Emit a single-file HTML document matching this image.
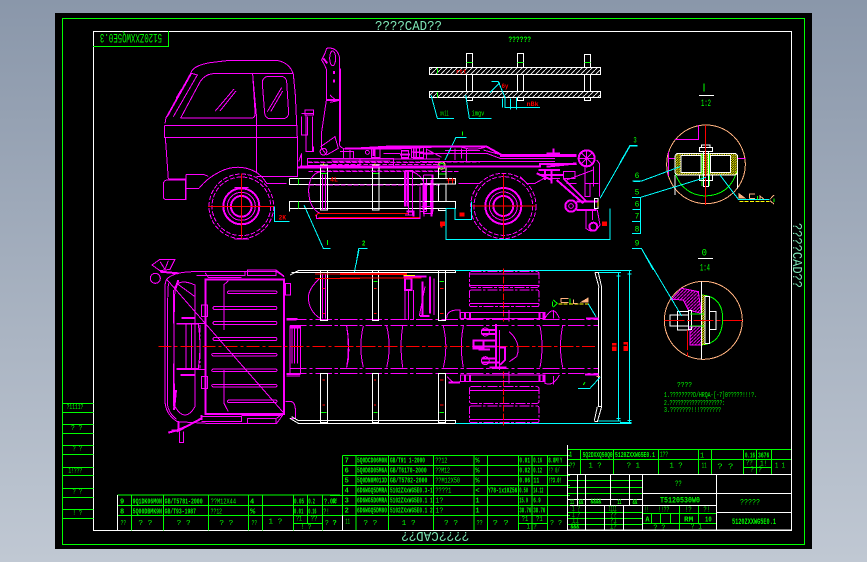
<!DOCTYPE html>
<html><head><meta charset="utf-8"><style>
html,body{margin:0;padding:0;width:867px;height:562px;overflow:hidden;background:linear-gradient(#8a97aa,#c0c8d3)}
#k{position:absolute;left:55px;top:13px;width:757px;height:536px;background:#000}
svg{position:absolute;left:0;top:0}
path,rect,circle,ellipse,line{fill:none}
.m{stroke:#f0f;stroke-width:3}.M{stroke:#f0f;stroke-width:6}
.w{stroke:#fff;stroke-width:3}.g{stroke:#0f0;stroke-width:3}.c{stroke:#0ff;stroke-width:3}
.r{stroke:#f00;stroke-width:3}.y{stroke:#ff0;stroke-width:3}.p{stroke:#ffb27f;stroke-width:3}
.d{stroke-dasharray:22 6 6 6}.e{stroke-dasharray:14 5}.f{stroke-dasharray:50 8 10 8}
text{font-family:"Liberation Mono",monospace;fill:#0f0;font-size:21px;font-weight:700}
.t{fill:#7fe8b8;font-size:14px;font-weight:400}
.n{font-weight:400}.rt{fill:#f00;font-size:20px}
.fr{fill:#f00;stroke:none}.fp{fill:#ffb27f;stroke:none}
.ftw{fill:url(#hw);stroke:#fff;stroke-width:3}
.fty{fill:url(#hy);stroke:#fff;stroke-width:3}
.ftm{fill:url(#hm);stroke:#f0f;stroke-width:3}
.bk{fill:#000}
</style></head><body><div id="k"></div>
<svg width="867" height="562" viewBox="0 0 867 562" xmlns="http://www.w3.org/2000/svg">
<defs>
<pattern id="hw" width="15" height="15" patternUnits="userSpaceOnUse"><path d="M0 15L15 0" stroke="#fff" stroke-width="2.6"/></pattern>
<pattern id="hy" width="7" height="7" patternUnits="userSpaceOnUse"><path d="M0 7L7 0" stroke="#ff0" stroke-width="3"/></pattern>
<pattern id="hm" width="10" height="10" patternUnits="userSpaceOnUse"><path d="M0 10L10 0" stroke="#f0f" stroke-width="3"/></pattern>
</defs>

<!-- frames -->
<rect x="62.5" y="18.5" width="742" height="526" stroke="#0f0" stroke-width="1"/>
<path d="M93.5 31.5H791.5V530.5H93.5Z" stroke="#fff" stroke-width="1"/>
<path d="M93 46.5H169M168.5 31V47" stroke="#0f0" stroke-width="1"/>
<text class="t" x="375" y="30" textLength="67" lengthAdjust="spacingAndGlyphs">????CAD??</text>
<text class="t" transform="translate(469 532) rotate(180)" textLength="68" lengthAdjust="spacingAndGlyphs" y="0">????CAD??</text>
<text class="t" transform="translate(793 223) rotate(90)" textLength="65" lengthAdjust="spacingAndGlyphs" y="0">????CAD??</text>
<text style="font-size:13px;font-weight:400" transform="translate(162 34) rotate(180)" y="0" textLength="62" lengthAdjust="spacingAndGlyphs">5120ZXXWQ5E0.3</text>

<!-- cab + front chassis, zoom coords -->
<g transform="translate(60 15) scale(.33333)" shape-rendering="crispEdges">
<path class="m" d="M315 325L318 308L392 175Q398 152 450 143L500 137H655Q690 145 700 178L706 240L713 390V485H590"/>
<path class="m" d="M313 331V367H713M313 331H713M316 367L325 492M578 178L590 310V472"/>
<path class="m" d="M362 309H578Q587 305 585 290L578 176M700 176H460Q430 178 415 210L362 309"/>
<path class="m" d="M625 184H665Q678 186 680 200L686 295Q684 310 670 311H630Q616 310 614 295L607 205Q607 186 625 184Z"/>
<path class="m" d="M466 288L522 222M480 288L528 228M622 290L665 218M632 290L668 228M322 305L395 175L412 180L340 305"/>
<path class="M" d="M350 250L365 225"/>
<path class="m" d="M417 520Q440 490 480 470Q520 450 560 460Q600 470 620 505H680M378 478H430L445 484M378 478V555M378 520H417"/>
<path class="m" d="M322 495H376V553H316Q310 552 310 545V505Q312 496 322 495Z"/><path class="M" d="M325 493H378"/>
<circle class="m e" cx="544" cy="574" r="97"/><circle class="m e" cx="544" cy="574" r="88"/>
<circle class="M" cx="544" cy="574" r="54"/><circle class="m" cx="544" cy="574" r="42"/><circle class="M" cx="544" cy="574" r="31"/>
<path class="m" d="M523 672H567M523 518H565"/>
<path class="r" d="M444 574H640M544 475V670"/>
<path class="c" d="M643 575V620H688M732 570L790 700H812M896 700L888 750M896 700H922"/>
<path class="w" d="M688 590V560H1140M688 580H1140M688 490V508H1140M688 490H1140"/>
<path class="g" d="M716 490V508M716 560V580M802 675V690"/>
<text class="rt" x="656" y="614" textLength="22" lengthAdjust="spacingAndGlyphs">2K</text>
<text class="rt" x="810" y="500" textLength="24" lengthAdjust="spacingAndGlyphs">4L</text>
<text x="906" y="692" textLength="10" lengthAdjust="spacingAndGlyphs">2</text>
<path class="m" d="M800 100Q830 95 838 125V390Q845 402 860 402M800 165V250L785 350V400L800 420M800 165Q795 150 785 135L795 115M800 100L795 115"/>
<ellipse class="m" cx="818" cy="130" rx="9" ry="22"/><path class="M" d="M790 130L802 145M800 255H838M840 160V380"/>
<path class="m" d="M810 240L830 258L810 262M820 170h4v6h-4zM820 195h4v6h-4z"/>
<path class="m" d="M725 295H762M735 285H760V300H735ZM725 305V360H742V305M738 300V410H760V395M758 305V410"/>
<path class="m" d="M782 395L825 365L835 400L800 420M790 400a10 10 0 1 0 1 0M716 440L725 415V455"/>
<path class="M" d="M860 400H900L1000 394H1140"/>
<path class="m" d="M742 430H900V452H742ZM815 432H1140M815 438H990M850 400V430M870 405V430M920 402H960M945 400V430M1025 408H1045V430H1025ZM1060 395H1090V430H1060ZM1070 395V430M1060 412H1090"/>
<path class="m e" d="M745 442H1140M815 448H1140" stroke-width="4"/>
<circle class="m" cx="922" cy="412" r="6"/>
<path class="M" d="M713 458H1140"/>
<path class="m e" d="M780 468H1140M748 510H1140"/>
<path class="w" d="M781 450H803V585H781ZM937 450H957V585H937Z"/>
<path class="m" d="M787 478V585M797 478V585M780 470Q745 480 746 530Q748 580 780 595M1035 466H1058V600H1035M1045 466V600M1058 470Q1082 480 1090 500M1090 480V595H1118V480H1090M1100 490V590"/>
<path class="M" d="M1118 478V590"/>
<path class="y" d="M783 453H799M939 453H955"/><path class="y" d="M791 446V458M945 446V458" />
<path class="g" d="M783 475H801M939 475H955"/>
<path class="r" d="M765 603L775 595H1045M775 607H1080" stroke-width="4"/>
<path class="m" d="M770 600V610H1080V590H1100"/>
<path class="M" d="M1040 590H1060V605"/>
</g>

<!-- deck density -->
<g transform="translate(300 120) scale(.33333)" shape-rendering="crispEdges">
<path class="M" d="M135 85H300L400 80H540M0 140H480"/>
<path class="m" d="M22 115H280V138H22ZM120 95H160V115M215 85H240V112H215ZM305 92H325V112H305ZM335 80H370V112H335ZM345 80V112M358 80V112M335 96H370M250 100H300M380 88L425 112M435 92H540M500 85V125"/>
<path class="m e" d="M22 126H540M25 155H480"/>
<path class="M" d="M220 88V108M300 104H330M370 100H400M315 152V260M322 152V260M375 190V270M395 180V290"/>
<path class="m" d="M365 190H392V260H365"/>
</g>

<!-- top view cab -->
<g transform="translate(60 250) scale(.33333)" shape-rendering="crispEdges">
<path class="m" d="M320 88Q340 66 400 65H650L672 80M672 490L650 520H440L352 515Q315 492 315 450V110Q315 98 320 88Z"/>
<path class="m" d="M326 100Q322 110 322 300V460Q325 490 350 508M340 120V220M340 340V470"/>
<path class="M" d="M436 85V495M433 88H675M433 492H675M672 85V495"/>
<path class="m" d="M505 92L492 104V240M492 360V460L505 485"/>
<path class="m" d="M506 123H648Q654 127 648 131H506Q498 127 506 123Z"/>
<path class="m" d="M462 170H648Q654 174 648 178H462Q454 174 462 170Z"/>
<path class="m" d="M462 215H648Q654 219 648 223H462Q454 219 462 215Z"/>
<path class="m" d="M462 263H648Q654 267 648 271H462Q454 267 462 263Z"/>
<path class="m" d="M460 310H648Q654 314 648 318H460Q450 314 460 310Z"/>
<path class="m" d="M460 357H648Q654 361 648 365H460Q450 361 460 357Z"/>
<path class="m" d="M460 403H648Q654 407 648 411H460Q450 407 460 403Z"/>
<path class="m" d="M506 450H648Q654 454 648 458H506Q498 454 506 450Z"/>
<path class="m" d="M345 110Q360 85 405 105V470Q375 520 345 470Q338 300 345 110Z"/>
<path class="m" d="M350 100L405 140M350 220H433M350 358H433M350 222H378V355H350M378 222H415Q425 290 415 355H378M395 222V355"/>
<path class="M" d="M345 120L355 90M348 420L342 480M365 204H405M362 375H405"/>
<path class="m d" d="M420 225V355"/>
<path class="m" d="M276 45L300 28H345L330 58L300 62ZM300 35L315 58M325 32L315 58"/>
<ellipse class="m" cx="286" cy="85" rx="15" ry="15"/><path class="M" d="M300 65L355 70"/>
<path class="m" d="M325 548L355 538L420 510M358 545V578H370V545M335 540H365"/><path class="M" d="M325 548L355 540M355 515V540M425 505L350 545"/>
<path class="m" d="M410 65H555V76H410M562 60H648V76H562ZM648 60L672 78M562 506H648V520H562ZM425 500H545V515H425M648 506L670 490M435 68L445 82H545M425 165H442V200H425ZM425 380H442V415H425ZM676 100H692V135H676ZM676 455H695Q708 460 706 490V505H690"/>
<path class="M" d="M545 495H665M425 495V510"/>
<path class="m" d="M690 228H722V370H690ZM696 235V340M704 235V340M712 235V340M680 205H712M680 378H720"/>
<path class="M" d="M680 208H710M680 372H722M692 232H720"/>
<path class="m f" d="M690 208H900M690 226H900M690 355H900M690 371H900"/>
<path class="m" d="M860 228Q868 270 866 325L860 352M780 85Q745 115 745 145Q748 185 780 205"/>
<path class="r" stroke-dasharray="40 8 10 8" d="M295 289H900"/>
<path class="w" d="M690 75L715 62H900M695 68L715 68H900M690 505L715 520H900M695 500L715 512H900"/>
<path class="w" d="M781 62V212H803V62M781 370H803V518H781Z"/>
<path class="m" d="M787 70V205M797 70V205"/>
<path class="r" d="M765 72H900M765 85H900"/>
<path class="c" d="M882 70L897 0"/>
<path class="r" d="M788 115h7M788 190h7M788 390h7M788 465h7" stroke-width="6"/>
<path class="g" d="M783 487H800"/>
</g>

<!-- top view chassis -->
<g transform="translate(340 250) scale(.33333)" shape-rendering="crispEdges">
<path class="m f" d="M0 208H775M0 226H775M0 355H775M0 371H775"/>
<path class="m" d="M20 228Q30 290 20 352M70 228Q55 290 70 352M140 228Q155 290 140 352M188 228Q178 290 188 352M310 228Q325 290 310 352M370 228Q358 290 370 352M600 228Q612 290 600 352M668 228Q655 290 668 352M508 245Q545 280 530 320L508 335"/>
<path class="r" stroke-dasharray="40 8 10 8" d="M0 289H765"/>
<path class="w" d="M0 62H347V68H0M0 512H347V520H0"/>
<path class="w" d="M97 62V212H116V62M295 62V212H317V62M97 370H116V518H97ZM295 370H317V518H295Z"/>
<path class="c" d="M347 62H875M347 520H875M836 68V512M868 62V520M775 68H843M775 513H843M830 78H842M862 72H874M830 505H842M862 512H874"/>
<g stroke-dasharray="30 5 8 5"><rect class="m" x="388" y="65" width="209" height="47" rx="6"/><rect class="m" x="388" y="120" width="209" height="50" rx="6"/><rect class="m" x="388" y="410" width="209" height="50" rx="6"/><rect class="m" x="388" y="468" width="209" height="50" rx="6"/></g>
<path class="m" d="M388 72H597M388 106H597M388 160H597M388 422H597M388 508H597"/>
<path class="r" stroke-dasharray="20 5" d="M490 55V215M490 365V527"/>
<path class="m" d="M362 187H615V205H362ZM362 375H615V395H362ZM320 205Q320 178 360 180V205M615 205Q640 160 658 205M322 380Q340 405 360 395M615 380V400Q640 410 658 375M640 180V205M640 378V403M507 180V215M507 365V400M478 240V360"/>
<path class="M" d="M375 186V205M390 186V205M598 186V205M610 186V205M375 375V395M390 375V395M598 375V395M610 375V395M325 397H360"/>
<path class="M" d="M468 222V352M425 240H470M425 252H465M402 272H470M402 290H470M415 298H450M425 325H470M425 338H480M448 352H500M480 292H495V330L480 345"/>
<circle class="m" cx="436" cy="246" r="12"/><circle class="m" cx="436" cy="332" r="12"/><rect class="M" x="400" y="272" width="30" height="24"/>
<path class="M" d="M195 85H215V120H195ZM270 80V190M248 95V195"/>
<path class="m" d="M195 120V210M205 120V210M220 120V210M238 198L255 110M282 85V195"/>
<path class="M" d="M190 80H260M240 198H268"/>
<path class="r" d="M0 70H200V73H0M0 84H245" stroke-width="4"/><path class="y" d="M190 76H225"/>
<path class="r" d="M102 115h8M102 190h8M300 115h10M300 190h10M102 390h6M102 465h6M300 390h10M300 465h10" stroke-width="5"/>
<path class="g" d="M298 95H312M100 95H112M298 487H312M100 487H112"/>
<path class="w" d="M775 112V470H785V112M765 68L777 112M775 68L785 112M763 512L772 470M772 515L785 470M765 68H775M763 514H772"/>
<path class="y" stroke-dasharray="12 4" d="M655 162H745"/>
<path class="g" d="M640 150L652 160L640 172M690 145V160M638 155V170"/>
<path class="c" d="M745 162L768 200"/>
<path class="p" d="M663 158V145H685M685 158H663M700 148V160L712 160"/>
<path class="fp" d="M720 157L745 142V157Z"/>
<path class="M" d="M738 206H775M735 374H775"/>
<path class="c" d="M714 415H750L780 382"/><path class="g" d="M730 405L735 396"/>
<path class="p" d="M770 380h10"/>
<path class="fr" d="M816 279h14v7h-14zM816 290h14v13h-14zM850 276h14v8h-14zM850 288h14v15h-14z"/>
</g>

<!-- plan rails + right side elevation -->
<g transform="translate(420 20) scale(.33333)" shape-rendering="crispEdges">
<text x="265" y="66" textLength="68" lengthAdjust="spacingAndGlyphs" style="font-size:24px">??????</text>
<rect class="ftw" x="28" y="142" width="514" height="21"/><rect class="ftw" x="28" y="214" width="514" height="19"/>
<path class="w" d="M140 142V100H157V142M140 163V214M157 163V214M140 233V242H157V233M293 142V100H310V142M293 163V214M310 163V214M293 233V242H310V233M494 142V103H512V142M494 163V214M512 163V214M494 233V242H512V233"/>
<path class="g" d="M140 127H157M293 127H310M494 127H512M52 144V160M52 216V232"/>
<path class="c" d="M33 225L52 295H102M137 225L148 295H215M215 185H235L255 232V262H360M248 262V235M272 235V268M290 232V268M210 218L240 188"/>
<text class="n" x="60" y="286" textLength="26" lengthAdjust="spacingAndGlyphs">xvii</text><text class="n" x="155" y="286" textLength="38" lengthAdjust="spacingAndGlyphs">imgv</text>
<text class="rt" x="108" y="160" textLength="32" lengthAdjust="spacingAndGlyphs">rtt</text><text class="rt" x="245" y="204" textLength="20" lengthAdjust="spacingAndGlyphs">6y</text><text class="rt" x="320" y="258" textLength="36" lengthAdjust="spacingAndGlyphs">nBk</text>
<!-- rear axle -->
<circle class="m e" cx="250" cy="558" r="98"/><circle class="m e" cx="250" cy="558" r="88"/>
<circle class="M" cx="250" cy="558" r="54"/><circle class="m" cx="250" cy="558" r="42"/><circle class="M" cx="250" cy="558" r="30"/>
<path class="r" d="M152 558H348M250 462V655"/>
<path class="w" d="M0 475H107V492H0M0 545H107V566H0M55 440V475M78 440V475M55 492V545M78 492V545M55 566V572H78V566"/>
<path class="m" d="M0 500V590M36 490V590M12 490V590M115 490H180M318 490H345L372 475H420M440 490H470"/>
<path class="M" d="M10 490V570"/>
<circle class="g" cx="65" cy="437" r="7"/><circle class="p" cx="65" cy="437" r="11"/>
<path class="g" d="M57 462H76M128 335V346"/>
<path class="c" d="M75 420L108 352H140M78 565V658H570V565M78 565H105V598H155V545M540 535L630 378H652M640 484H660M636 532H660M640 568H660M636 604H660M636 640H660M636 685H660"/>
<text x="640" y="368" textLength="10" lengthAdjust="spacingAndGlyphs" style="font-size:24px" class="n">3</text>
<text class="n" style="font-size:24px" x="644" y="474">6</text><text class="n" style="font-size:24px" x="644" y="524">5</text><text class="n" style="font-size:24px" x="644" y="560">6</text><text class="n" style="font-size:24px" x="644" y="596">7</text><text class="n" style="font-size:24px" x="644" y="634">8</text><text class="n" style="font-size:24px" x="644" y="676">9</text>
<path class="M" d="M0 380H200L245 405H470M0 440H360V432H470M380 440L470 430"/>
<path class="m" d="M0 400H200L240 415H405M0 425H405M20 385V415M105 385V420M125 385V415M190 390L245 405M120 380Q160 395 200 380"/>
<path class="M" d="M240 408H470M400 385V410M380 400H420"/>
<circle class="M" cx="500" cy="415" r="24"/><path class="m" d="M500 388V442M473 415H527M482 397L518 433M518 397L482 433"/>
<path class="m" d="M530 420L538 430V530M495 440V530H510V490M495 490H535M520 440V500M430 455H465V475H430Z"/>
<path class="M" d="M355 450H420M360 465H430M350 460L395 480M395 450V490M375 450V480M410 480L490 550M430 475L500 545"/>
<path class="m" d="M440 480L520 450M300 470L320 490"/>
<circle class="M" cx="453" cy="558" r="17"/><circle class="m" cx="453" cy="558" r="7"/>
<path class="M" d="M470 545H535M470 570H530"/>
<path class="m" d="M498 570V625Q520 645 540 615L532 570M518 570V600"/><circle class="M" cx="520" cy="620" r="12"/>
<path class="w" d="M523 535H534V566H523Z"/><path class="y" d="M534 545V560"/>
<rect class="fr" x="60" y="604" width="15" height="14"/><rect class="fr" x="62" y="618" width="6" height="5"/>
<rect class="fr" x="546" y="604" width="15" height="14"/><rect class="fr" x="118" y="578" width="16" height="12"/>
<path class="r" d="M80 480H106M85 474V490M97 474V490" stroke-width="4"/>
</g>

<!-- detail I -->
<g transform="translate(620 70) scale(.33333)" shape-rendering="crispEdges">
<circle class="p" cx="258" cy="283" r="118"/>
<path class="g" d="M252 40V64"/><path class="w" d="M237 76H282M234 565H279"/>
<text class="n" x="243" y="108" style="font-size:30px" textLength="30" lengthAdjust="spacingAndGlyphs">1:2</text>
<path class="m" d="M236 165V208H165M352 265H376M145 245V318M145 265H165"/>
<path class="g" d="M165 310Q190 375 256 378Q330 375 350 305"/>
<rect class="fty" x="165" y="250" width="188" height="65" rx="10"/>
<rect class="w bk" style="fill:#000" x="183" y="256" width="60" height="52"/><rect class="w" style="fill:#000" x="272" y="256" width="60" height="52"/>
<path class="g" d="M246 250V348M268 250V348"/><path class="w" d="M250 245V350H266V245"/>
<path class="w" d="M238 232H278V245H238ZM245 225H270V232H245ZM238 315H278V332H238Z"/>
<path class="w" d="M165 315V375M352 310V355"/>
<path class="r" d="M256 165V405"/>
<path class="c" d="M38 333H65L180 290M38 382H62L258 322M62 382V490H38M38 418H62M38 454H62M36 535H64L100 600M0 278L30 226H52M300 315L355 388H448"/>
<path class="y" stroke-dasharray="12 4" d="M358 394H448"/>
<path class="p" d="M450 388L462 375M450 392L462 402M388 385V372H405M388 385H405M420 388V378L432 388"/>
<path class="fp" d="M355 368L378 385H355Z"/><path class="g" d="M462 385V396M412 378V388"/>
</g>

<!-- detail II -->
<g transform="translate(620 240) scale(.33333)" shape-rendering="crispEdges">
<circle class="p" cx="250" cy="241" r="117"/>
<text x="245" y="46" class="n" style="font-size:30px" textLength="16" lengthAdjust="spacingAndGlyphs">0</text>
<text x="240" y="92" class="n" style="font-size:30px" textLength="30" lengthAdjust="spacingAndGlyphs">1:4</text>
<path class="ftm" d="M155 178L185 145L235 155L244 220L205 210L190 180Z"/><path class="ftm" d="M210 260H244V315H210Z"/>
<path class="g" d="M245 165Q310 170 308 241Q305 310 245 315"/>
<rect style="fill:url(#hy)" x="246" y="165" width="11" height="150"/>
<path class="w" d="M244 125V358M150 225H205V258H150ZM172 215H205V270H172ZM205 212H215V268H205ZM255 170H268V310H255ZM268 215H288V268H268Z"/>
<path class="g" d="M210 222H252M210 258H252"/>
<path class="r" stroke-dasharray="60 8 12 8" d="M133 241H368M202 270V350"/>
<path class="c" d="M36 25H64L185 228M0 92H35M28 92V548M0 548H35"/>
<path class="r" d="M10 310H22V332H10" stroke-width="4"/>
</g>
<text x="677" y="387" style="font-size:7px" textLength="15" lengthAdjust="spacingAndGlyphs" class="n">????</text>
<text x="664" y="397" style="font-size:7px" textLength="93" lengthAdjust="spacingAndGlyphs" class="n">1.????????D/HRQA-[-7]0?????!!!?.</text>
<text x="664" y="405" style="font-size:7px" textLength="61" lengthAdjust="spacingAndGlyphs" class="n">2.???????????????????:</text>
<text x="664" y="412" style="font-size:7px" textLength="57" lengthAdjust="spacingAndGlyphs" class="n">3.???????!!!???????</text>

<!-- title block right -->
<g transform="translate(560 440) scale(.33333)" shape-rendering="crispEdges">
<path class="g" d="M22 28H695M22 58H695M22 28V103M62 28V103M160 28V103M295 28V103M415 28V103M455 28V103M550 28V103M590 28V103M634 28V103M550 82H634M22 122H248M22 142H248M22 160H248M22 217H248M22 235H248M22 253H248M248 220H470M248 250H470M358 196V270M274 220V250M302 220V250M331 220V250M415 196V250"/>
<path class="w" d="M22 103H695M695 0V270H22V103M52 103V196M76 103V196M152 103V196M209 103V196M248 103V270M470 103V270M22 178H248M22 196H470M248 160H695M470 217H695M76 196V270M133 196V270M190 196V270"/>
<path class="g" d="M0 46H22M0 76H22M0 106H22M0 136H22M0 166H22M0 196H22M0 226H22"/>
<text x="28" y="50" textLength="8" lengthAdjust="spacingAndGlyphs">1</text>
<text x="68" y="51" textLength="90" lengthAdjust="spacingAndGlyphs">5Q2DXXQ50Q0</text>
<text x="165" y="51" textLength="120" lengthAdjust="spacingAndGlyphs">5120ZXXWG5E0.1</text>
<text class="n" x="300" y="50" textLength="24" lengthAdjust="spacingAndGlyphs">1??</text>
<text class="n" x="420" y="52">1</text>
<text x="555" y="52" textLength="30" lengthAdjust="spacingAndGlyphs">0.16</text><text x="594" y="52" textLength="34" lengthAdjust="spacingAndGlyphs">3676</text>
<text class="n" x="28" y="82" textLength="18" lengthAdjust="spacingAndGlyphs">??</text>
<text class="n" x="85" y="83" textLength="40" lengthAdjust="spacingAndGlyphs">1  ?</text>
<text class="n" x="200" y="83" textLength="40" lengthAdjust="spacingAndGlyphs">?  1</text>
<text class="n" x="328" y="83" textLength="40" lengthAdjust="spacingAndGlyphs">1  ?</text>
<text class="n" x="425" y="83" textLength="15" lengthAdjust="spacingAndGlyphs">11</text>
<text class="n" x="472" y="85" textLength="48" lengthAdjust="spacingAndGlyphs">?  ?</text>
<text class="n" x="558" y="74" textLength="20" lengthAdjust="spacingAndGlyphs">??</text><text class="n" x="600" y="76" textLength="22" lengthAdjust="spacingAndGlyphs">1!</text>
<text class="n" x="570" y="95" textLength="36" lengthAdjust="spacingAndGlyphs">? ?</text>
<text class="n" x="645" y="83" textLength="30" lengthAdjust="spacingAndGlyphs">1 1</text>
<text x="345" y="138" textLength="20" lengthAdjust="spacingAndGlyphs" class="n" style="font-size:24px">??</text>
<text x="300" y="188" textLength="120" lengthAdjust="spacingAndGlyphs" style="font-size:26px">T5120530W0</text>
<text x="540" y="194" textLength="60" lengthAdjust="spacingAndGlyphs" style="font-size:26px" class="n">?????</text>
<text x="516" y="252" textLength="132" lengthAdjust="spacingAndGlyphs" style="font-size:24px">5120ZXXWG5E0.1</text>
<text x="30" y="192" textLength="12" lengthAdjust="spacingAndGlyphs">11</text><text x="56" y="192" textLength="14" lengthAdjust="spacingAndGlyphs">&amp;&amp;</text><text x="92" y="190" textLength="32" lengthAdjust="spacingAndGlyphs">&amp;&amp;&amp;&amp;</text><text x="172" y="192" textLength="12" lengthAdjust="spacingAndGlyphs">11</text><text x="218" y="192" textLength="14" lengthAdjust="spacingAndGlyphs">&amp;&amp;</text>
<text class="n" x="36" y="212" textLength="24" lengthAdjust="spacingAndGlyphs">1 ?</text><text class="n" x="36" y="230" textLength="24" lengthAdjust="spacingAndGlyphs">1 ?</text><text class="n" x="36" y="248" textLength="20" lengthAdjust="spacingAndGlyphs">11</text><text x="32" y="266" textLength="26" lengthAdjust="spacingAndGlyphs">&amp;&amp;&amp;</text>
<text class="n" x="146" y="212" textLength="24" lengthAdjust="spacingAndGlyphs">1111</text><text class="n" x="150" y="230" textLength="20" lengthAdjust="spacingAndGlyphs">??</text><text class="n" x="150" y="248" textLength="20" lengthAdjust="spacingAndGlyphs">?1</text><text class="n" x="150" y="266" textLength="20" lengthAdjust="spacingAndGlyphs">1?</text>
<text class="n" x="252" y="214" textLength="14" lengthAdjust="spacingAndGlyphs">!!</text><text class="n" x="294" y="214" textLength="34" lengthAdjust="spacingAndGlyphs">!!??</text><text class="n" x="375" y="214" textLength="20" lengthAdjust="spacingAndGlyphs">!?</text><text class="n" x="430" y="214" textLength="20" lengthAdjust="spacingAndGlyphs">?!</text>
<text x="256" y="245">A</text><text x="372" y="244" textLength="28" lengthAdjust="spacingAndGlyphs">RM</text><text x="435" y="244" textLength="20" lengthAdjust="spacingAndGlyphs">10</text>
<text class="n" x="280" y="268" textLength="36" lengthAdjust="spacingAndGlyphs">? ?</text><text class="n" x="392" y="265" textLength="34" lengthAdjust="spacingAndGlyphs">? 1</text>
</g>

<!-- parts table upper -->
<g transform="translate(330 445) scale(.33333)" shape-rendering="crispEdges">
<path class="g" d="M38 31H720M38 62H720M38 92H720M38 122H720M0 152H720M0 182H720M0 212H720M38 31V212M78 31V256M175 31V256M310 31V256M432 31V256M472 31V256M565 31V256M606 31V256M652 31V256M565 235H652"/>
<path class="w" d="M38 212V256M0 256H720M712 0V256"/>
<text x="44" y="53">7</text><text x="44" y="83">6</text><text x="44" y="113">5</text><text x="44" y="143">4</text><text x="44" y="173">3</text><text x="44" y="203">2</text>
<text x="81" y="53" textLength="90" lengthAdjust="spacingAndGlyphs">5Q0DCD06M0N</text><text x="81" y="83" textLength="90" lengthAdjust="spacingAndGlyphs">5Q0D8D05M6A</text><text x="81" y="113" textLength="90" lengthAdjust="spacingAndGlyphs">5Q0DN8M013D</text><text x="81" y="143" textLength="90" lengthAdjust="spacingAndGlyphs">6D6WGQ5DMRA</text><text x="81" y="173" textLength="90" lengthAdjust="spacingAndGlyphs">6D6WG5D0MRA</text><text x="81" y="203" textLength="90" lengthAdjust="spacingAndGlyphs">6D6WGQ5DM80</text>
<text x="180" y="53" textLength="105" lengthAdjust="spacingAndGlyphs">GB/T91 1-2000</text><text x="180" y="83" textLength="110" lengthAdjust="spacingAndGlyphs">GB/T6170-2000</text><text x="180" y="113" textLength="112" lengthAdjust="spacingAndGlyphs">GB/T5782-2000</text><text x="180" y="143" textLength="128" lengthAdjust="spacingAndGlyphs">5102ZXxWG5E0.3-1</text><text x="180" y="173" textLength="128" lengthAdjust="spacingAndGlyphs">5102ZXxWG5E0.1 1</text><text x="180" y="203" textLength="128" lengthAdjust="spacingAndGlyphs">5102ZXxWG5E0.1 2</text>
<text class="n" x="316" y="53" textLength="36" lengthAdjust="spacingAndGlyphs">??12</text><text class="n" x="316" y="83" textLength="44" lengthAdjust="spacingAndGlyphs">??M12</text><text class="n" x="316" y="113" textLength="74" lengthAdjust="spacingAndGlyphs">??M12X50</text><text class="n" x="316" y="143" textLength="48" lengthAdjust="spacingAndGlyphs">????1</text><text class="n" x="316" y="173" textLength="24" lengthAdjust="spacingAndGlyphs">1?</text><text class="n" x="316" y="203" textLength="24" lengthAdjust="spacingAndGlyphs">1?</text>
<text x="436" y="53">%</text><text x="436" y="83">%</text><text x="436" y="113">%</text><text x="436" y="143">&lt;</text><text x="436" y="173">1</text><text x="436" y="203">1</text>
<text x="474" y="143" textLength="88" lengthAdjust="spacingAndGlyphs">Y78-1x10Z56</text>
<text x="568" y="53" textLength="32" lengthAdjust="spacingAndGlyphs">0.01</text><text x="568" y="83" textLength="32" lengthAdjust="spacingAndGlyphs">0.02</text><text x="568" y="113" textLength="32" lengthAdjust="spacingAndGlyphs">0.06</text><text x="568" y="143" textLength="26" lengthAdjust="spacingAndGlyphs">0.50</text><text x="568" y="173" textLength="26" lengthAdjust="spacingAndGlyphs">15.9</text><text x="568" y="203" textLength="36" lengthAdjust="spacingAndGlyphs">38.76</text>
<text x="610" y="53" textLength="26" lengthAdjust="spacingAndGlyphs">0.16</text><text x="610" y="83" textLength="26" lengthAdjust="spacingAndGlyphs">0.12</text><text x="610" y="113" textLength="18" lengthAdjust="spacingAndGlyphs">11</text><text x="610" y="143" textLength="30" lengthAdjust="spacingAndGlyphs">14.12</text><text x="610" y="173" textLength="22" lengthAdjust="spacingAndGlyphs">6.9</text><text x="610" y="203" textLength="36" lengthAdjust="spacingAndGlyphs">38.76</text>
<text x="655" y="53" textLength="42" lengthAdjust="spacingAndGlyphs">8.8M!Y</text><text class="n" x="655" y="83" textLength="34" lengthAdjust="spacingAndGlyphs">!? 0/</text><text x="655" y="113" textLength="40" lengthAdjust="spacingAndGlyphs">!?3.0!</text>
<text class="n" x="8" y="174" textLength="16" lengthAdjust="spacingAndGlyphs">1!</text>
<text class="n" x="8" y="240">?</text><text class="n" x="46" y="236" textLength="14" lengthAdjust="spacingAndGlyphs">11</text>
<text class="n" x="100" y="240" textLength="42" lengthAdjust="spacingAndGlyphs">?  ?</text><text class="n" x="215" y="240" textLength="42" lengthAdjust="spacingAndGlyphs">1  ?</text><text class="n" x="342" y="240" textLength="42" lengthAdjust="spacingAndGlyphs">?  ?</text><text class="n" x="440" y="240" textLength="18" lengthAdjust="spacingAndGlyphs">??</text><text class="n" x="488" y="240" textLength="48" lengthAdjust="spacingAndGlyphs">?  ?</text>
<text class="n" x="575" y="228" textLength="20" lengthAdjust="spacingAndGlyphs">?1</text><text class="n" x="618" y="228" textLength="20" lengthAdjust="spacingAndGlyphs">?1</text><text class="n" x="590" y="250" textLength="30" lengthAdjust="spacingAndGlyphs">1 ?</text>
<text class="n" x="660" y="240" textLength="36" lengthAdjust="spacingAndGlyphs">? ?</text>
</g>

<!-- parts table lower + side stack -->
<g transform="translate(60 395) scale(.33333)" shape-rendering="crispEdges">
<path class="g" d="M7 25H100M7 52H100M7 88H100M7 115H100M7 151H100M7 178H100M7 217H100M7 241H100M7 280H100M7 307H100M7 343H100M7 370H100"/>
<path class="g" d="M172 300H840M172 331H840M172 361H840M214 300V406M310 300V406M445 300V406M565 300V406M607 300V406M700 300V406M742 300V385M787 300V406M700 385H787"/>
<path class="w" d="M172 300V406"/>
<text class="n" x="20" y="42" textLength="50" lengthAdjust="spacingAndGlyphs">?1111?</text>
<text class="n" x="33" y="105" textLength="34" lengthAdjust="spacingAndGlyphs">? ?</text>
<text class="n" x="38" y="167" textLength="28" lengthAdjust="spacingAndGlyphs">? ?</text>
<text class="n" x="25" y="233" textLength="42" lengthAdjust="spacingAndGlyphs">1!???</text>
<text class="n" x="38" y="296" textLength="28" lengthAdjust="spacingAndGlyphs">? ?</text>
<text class="n" x="38" y="360" textLength="28" lengthAdjust="spacingAndGlyphs">! ?</text>
<text x="180" y="325">9</text><text x="180" y="355">8</text>
<text x="218" y="325" textLength="88" lengthAdjust="spacingAndGlyphs">9Q1DK06M0N</text><text x="218" y="355" textLength="88" lengthAdjust="spacingAndGlyphs">5Q00DBMK9N</text>
<text x="314" y="325" textLength="114" lengthAdjust="spacingAndGlyphs">GB/T5781-2000</text><text x="314" y="355" textLength="94" lengthAdjust="spacingAndGlyphs">GB/T93-1987</text>
<text class="n" x="452" y="325" textLength="76" lengthAdjust="spacingAndGlyphs">??M12X44</text><text class="n" x="452" y="355" textLength="34" lengthAdjust="spacingAndGlyphs">??12</text>
<text x="570" y="325">4</text><text x="570" y="355" textLength="16" lengthAdjust="spacingAndGlyphs">%</text>
<text x="702" y="325" textLength="30" lengthAdjust="spacingAndGlyphs">0.05</text><text x="702" y="355" textLength="28" lengthAdjust="spacingAndGlyphs">0.01</text><text x="745" y="325" textLength="20" lengthAdjust="spacingAndGlyphs">0.2</text><text x="745" y="355" textLength="24" lengthAdjust="spacingAndGlyphs">0.16</text>
<text x="792" y="325" textLength="36" lengthAdjust="spacingAndGlyphs">?.0R</text><text class="n" x="790" y="355" textLength="18" lengthAdjust="spacingAndGlyphs">?!</text>
<text class="n" x="182" y="390" textLength="16" lengthAdjust="spacingAndGlyphs">??</text><text class="n" x="235" y="390" textLength="42" lengthAdjust="spacingAndGlyphs">? ?</text><text class="n" x="350" y="390" textLength="42" lengthAdjust="spacingAndGlyphs">? ?</text><text class="n" x="478" y="390" textLength="42" lengthAdjust="spacingAndGlyphs">? ?</text><text class="n" x="575" y="390" textLength="16" lengthAdjust="spacingAndGlyphs">??</text><text class="n" x="625" y="386" textLength="42" lengthAdjust="spacingAndGlyphs">1 ?</text>
<text class="n" x="708" y="377" textLength="18" lengthAdjust="spacingAndGlyphs">?1</text><text class="n" x="752" y="377" textLength="20" lengthAdjust="spacingAndGlyphs">??</text><text class="n" x="722" y="402" textLength="32" lengthAdjust="spacingAndGlyphs">! ?</text>
<text class="n" x="795" y="390" textLength="34" lengthAdjust="spacingAndGlyphs">? ?</text>
</g>
</svg></body></html>
